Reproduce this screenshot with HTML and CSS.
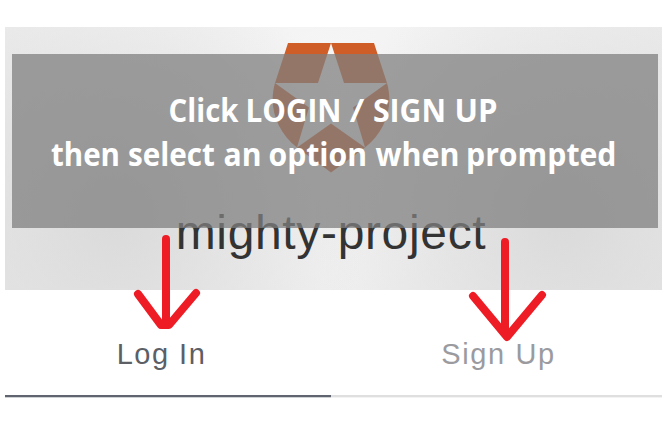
FILE: index.html
```
<!DOCTYPE html>
<html lang="en">
<head>
<meta charset="utf-8">
<title>mighty-project</title>
<link rel="stylesheet" href="styles.css">
</head>
<body>
<main class="widget">
  <header class="header">
    <svg class="logo" width="118" height="130" viewBox="0 0 118 130" fill="#cf5d28" aria-hidden="true">
      <path d="M16 0H59L46 40H3ZM59 0H102L115 40H72ZM3 40L37 64.500L25 104.500C5 89-4 64 3 40ZM115 40L81 64.500L93 104.500C113 89 122 64 115 40ZM25 104.500L59 80.500L93 104.500L59 129.500Z"/>
    </svg>
    <h1 class="name">mighty-project</h1>
  </header>
  <nav class="tabs">
    <a class="tab active">Log In</a>
    <a class="tab">Sign Up</a>
  </nav>
  <div class="notice">
    <svg class="message" width="646" height="174" viewBox="12 54 646 174">
      <text y="122"><tspan x="168.500" textLength="70" lengthAdjust="spacingAndGlyphs">Click</tspan> <tspan x="245.500" textLength="96" lengthAdjust="spacingAndGlyphs">LOGIN</tspan> <tspan class="slash" x="349.500" textLength="15" lengthAdjust="spacingAndGlyphs">/</tspan> <tspan x="373" textLength="73" lengthAdjust="spacingAndGlyphs">SIGN</tspan> <tspan x="454.500" textLength="43" lengthAdjust="spacingAndGlyphs">UP</tspan></text>
      <text y="166"><tspan x="51" textLength="69" lengthAdjust="spacingAndGlyphs">then</tspan> <tspan x="128" textLength="87" lengthAdjust="spacingAndGlyphs">select</tspan> <tspan x="223.500" textLength="38" lengthAdjust="spacingAndGlyphs">an</tspan> <tspan x="268.500" textLength="98.500" lengthAdjust="spacingAndGlyphs">option</tspan> <tspan x="375.500" textLength="84" lengthAdjust="spacingAndGlyphs">when</tspan> <tspan x="466" textLength="150.500" lengthAdjust="spacingAndGlyphs">prompted</tspan></text>
    </svg>
  </div>
  <svg class="arrows" width="667" height="442" viewBox="0 0 667 442" aria-hidden="true">
    <path d="M166 239V324M138 294L161 325H169L196 293"/>
    <path d="M505 242V334M473 296L507 337L542 295"/>
  </svg>
</main>
</body>
</html>
```
FILE: styles.css
```
body {
  margin: 0;
  background: #fff;
  font-family: "Liberation Sans", Arial, sans-serif;
}
.widget {
  position: relative;
  width: 667px;
  height: 442px;
  box-sizing: border-box;
  padding: 27px 5px 0;
  overflow: hidden;
}
.header {
  height: 263px;
  box-sizing: border-box;
  padding: 16px 5px 0 0;
  display: flex;
  flex-direction: column;
  align-items: center;
  background:
    radial-gradient(ellipse 250px 260px at 17% 72%, #dadada, rgba(218, 218, 218, 0)),
    radial-gradient(ellipse 250px 260px at 85% 72%, #dadada, rgba(218, 218, 218, 0)),
    radial-gradient(ellipse 400px 400px at 50% 10%, #f5f5f5, #f1f1f1 55%, #e9e9e9);
}
.logo {
  display: block;
}
.name {
  margin: 32px 0 0;
  font-size: 48px;
  line-height: 56px;
  font-weight: 400;
  color: #333;
  white-space: nowrap;
  letter-spacing: 0.65px;
}
.tabs {
  display: flex;
  height: 107px;
}
.tab {
  flex: 1;
  box-sizing: border-box;
  padding: 48px 0 0 4px;
  border-bottom: 2px solid #dfdfdf;
  box-shadow: 0 1px #f3f3f3;
  color: #9b9b9f;
  font-size: 29px;
  line-height: 32px;
  letter-spacing: 1.6px;
  text-align: center;
}
.active {
  flex: 0 0 326px;
  padding: 48px 13px 0 0;
  color: #5c5f66;
  border-color: #5f646e;
  box-shadow: 0 1px #cfd2d5;
  letter-spacing: 1.5px;
}
.notice {
  position: absolute;
  left: 12px;
  top: 54px;
  width: 646px;
  height: 174px;
  background: rgba(127, 127, 127, 0.745);
}
.message {
  display: block;
  fill: #fff;
  font: 700 32px "Open Sans", sans-serif;
}
.slash {
  font-weight: 600;
}
.arrows {
  position: absolute;
  left: 0;
  top: 0;
  fill: none;
  stroke: #ee1c25;
  stroke-width: 8;
  stroke-linecap: round;
  stroke-linejoin: round;
}
```
